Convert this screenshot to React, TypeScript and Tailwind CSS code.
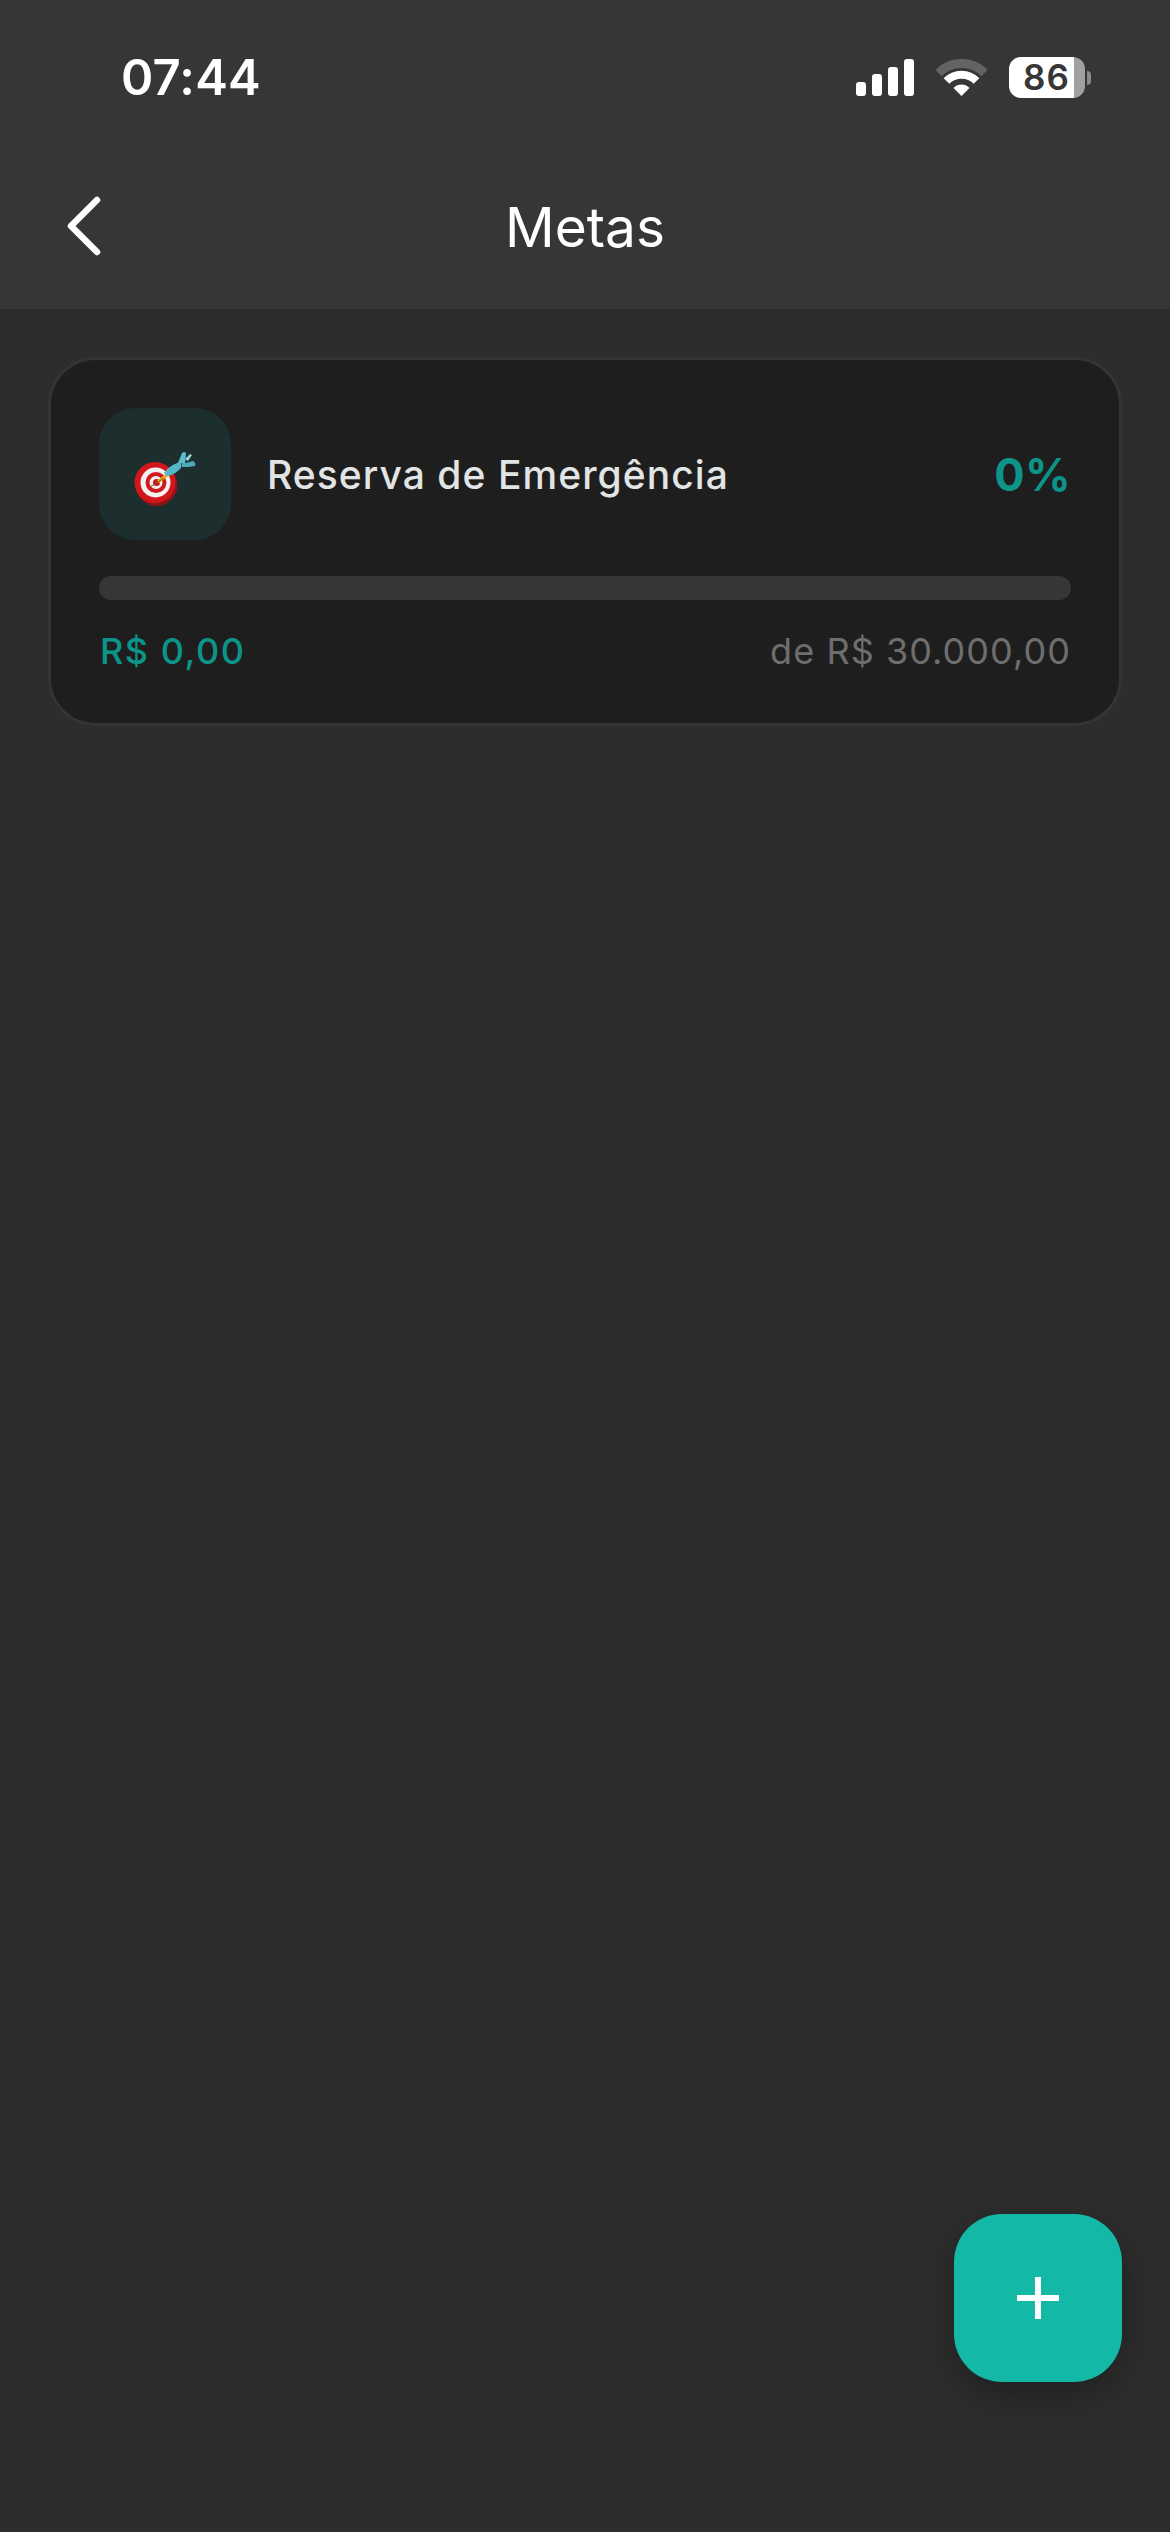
import React from "react";

const inter = { fontFamily: "Inter, 'Noto Sans', sans-serif" };

function SignalIcon() {
  return (
    <svg width="58" height="37" viewBox="0 0 58 37" fill="#fff" aria-hidden="true">
      <rect x="0" y="23" width="10" height="14" rx="3" />
      <rect x="16" y="15" width="10" height="22" rx="3" />
      <rect x="32" y="8" width="10" height="29" rx="3" />
      <rect x="48" y="0" width="10" height="37" rx="3" />
    </svg>
  );
}

function WifiIcon() {
  return (
    <svg width="51" height="37" viewBox="0 0 51 37" fill="none" aria-hidden="true">
      <path d="M2.5 14 A32.5 32.5 0 0 1 48.5 14" stroke="#636363" strokeWidth="9" />
      <path d="M10.5 22 A21 21 0 0 1 40.5 22" stroke="#ffffff" strokeWidth="8" />
      <path d="M25.5 37 L17.5 29 A11 11 0 0 1 33.5 29 Z" fill="#ffffff" />
    </svg>
  );
}

function Battery() {
  return (
    <div className="flex items-center">
      <div className="flex h-[41px] w-[76px] items-center justify-start rounded-[12px] bg-[linear-gradient(90deg,#ffffff_65px,#a0a0a0_65px)] pl-[14px]">
        <span className="text-[35px] font-semibold leading-[41px] tracking-[1px] text-[#363636]" style={inter}>
          86
        </span>
      </div>
      <div className="ml-[2px] h-[14px] w-[4px] rounded-r-full bg-[#8a8a8a]" />
    </div>
  );
}

function Bullseye() {
  return (
    <svg width="72" height="62" viewBox="0 0 72 62" aria-hidden="true">
      <circle cx="23.5" cy="40" r="21" fill="#8f1414" />
      <circle cx="22" cy="37.5" r="20.5" fill="#d3161c" />
      <circle cx="22.5" cy="37.5" r="15" fill="#f4f1f0" />
      <circle cx="23" cy="37.5" r="10.5" fill="#cf1b20" />
      <circle cx="23" cy="37.5" r="6.5" fill="#f4f1f0" />
      <circle cx="23.5" cy="37.5" r="3.5" fill="#c8141a" />
      <path d="M25 37 L34 30" stroke="#e5b21e" strokeWidth="3" />
      <path d="M17 42 L31 33" stroke="#8f5c12" strokeWidth="1" />
      <path d="M31 28 C35 22 41 19 47 17 C49 20 49 22 47 24 C43 28 38 31 34 31 Z" fill="#55b8c8" />
      <path d="M45 18 L49 8 C51 6 53 7 53 9 L52 19 Z" fill="#5cbccc" />
      <path d="M49 19 L60 16 C62 17 63 19 62 21 C58 22 53 22 49 22 Z" fill="#4ba9ba" />
      <path d="M52 14 L57 9 L59 10 L55 16 Z" fill="#8ed3dd" />
    </svg>
  );
}

export default function App() {
  return (
    <div className="relative flex h-[2532px] w-[1170px] flex-col overflow-hidden bg-[#2d2d2d]" style={inter}>
      <header className="flex h-[309px] flex-col bg-[#363636] text-white">
        <div className="flex items-center justify-between pl-[121px] pr-[79px] pt-[57px]">
          <span className="text-[49px] font-semibold leading-[41px] tracking-[0.2px]">07:44</span>
          <div className="flex items-center gap-[22px]">
            <SignalIcon />
            <WifiIcon />
            <Battery />
          </div>
        </div>
        <div className="relative mt-[105px] flex items-center justify-center">
          <svg
            className="absolute left-[66px] top-[-7px]"
            width="36"
            height="60"
            viewBox="0 0 36 60"
            fill="none"
            stroke="#fff"
            strokeWidth="6.5"
            strokeLinecap="round"
            strokeLinejoin="round"
            aria-hidden="true"
          >
            <path d="M31 4 L5 30 L31 56" />
          </svg>
          <h1 className="text-[55px] font-normal leading-[48px]">Metas</h1>
        </div>
      </header>

      <main className="px-[48px] pt-[48px]">
        <section className="flex h-[369px] flex-col rounded-[48px] border-[3px] border-[#343434] bg-[#1e1e1e] px-[48px] pt-[48px]">
          <div className="flex items-center">
            <div className="flex h-[132px] w-[132px] items-center justify-center rounded-[36px] bg-[#1d2e2e] pl-[8px] pt-[4px]">
              <Bullseye />
            </div>
            <span className="ml-[36px] text-[39px] font-medium leading-none tracking-[1.05px] text-[#e2e5e4]">
              Reserva de Emergência
            </span>
            <span className="ml-auto text-[45px] font-bold leading-none tracking-[0.4px] text-[#0d9488]">0%</span>
          </div>
          <div className="mt-[36px] h-[24px] rounded-full bg-[#363636]" />
          <div className="mt-[29px] flex items-center justify-between pl-[1px]">
            <span className="text-[36px] font-medium leading-[44px] tracking-[1.5px] text-[#0d9488]">R$ 0,00</span>
            <span className="text-[36px] font-normal leading-[44px] tracking-[1.05px] text-[#6e6e6e]">de R$ 30.000,00</span>
          </div>
        </section>
      </main>

      <button
        type="button"
        aria-label="Adicionar meta"
        className="absolute left-[954px] top-[2214px] flex h-[168px] w-[168px] items-center justify-center rounded-[48px] bg-[#14b8a6] shadow-[0_12px_36px_rgba(0,0,0,0.3)]"
      >
        <svg width="42" height="42" viewBox="0 0 42 42" fill="#fff" aria-hidden="true">
          <rect x="18" y="0" width="6" height="42" />
          <rect x="0" y="18" width="42" height="6" />
        </svg>
      </button>
    </div>
  );
}
